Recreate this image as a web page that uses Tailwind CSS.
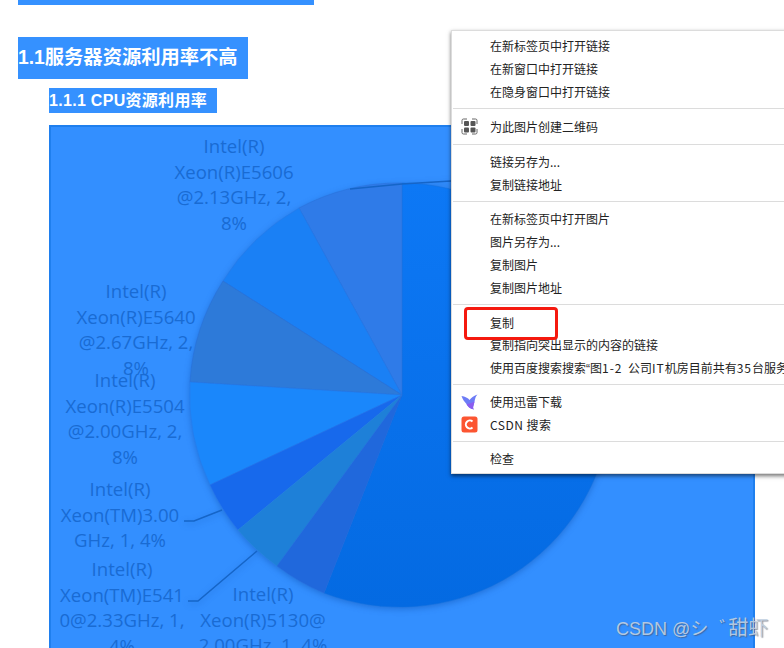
<!DOCTYPE html>
<html lang="zh-CN">
<head>
    <meta charset="UTF-8">
    <title>Context menu over chart</title>
    <script src="https://cdn.jsdelivr.net/npm/@tailwindcss/browser@4"></script>
</head>
<body class="relative w-[784px] h-[648px] overflow-hidden bg-white font-['Liberation_Sans','Noto_Sans_CJK_SC',sans-serif]">

    <!-- Document -->
    <div class="ml-[18px] w-[296px] h-[5px] bg-[#3591ff]"></div>
    <h2 class="ml-[18px] mt-[32px] w-[230px] h-[42px] bg-[#3591ff] text-white font-bold text-[19.3px] leading-[42px] whitespace-nowrap">1.1服务器资源利用率不高</h2>
    <h3 class="ml-[49px] mt-[9px] w-[168px] h-[25px] bg-[#3591ff] text-white font-bold text-[16px] tracking-[0.3px] leading-[25px] whitespace-nowrap">1.1.1 CPU资源利用率</h3>

    <!-- Pie chart -->
    <div class="relative ml-[49px] mt-[12px] w-[706px] h-[600px] bg-[#338fff] border-2 border-[#1f7fee] font-['Open_Sans',sans-serif] text-[18.6px] leading-[25.5px] text-[#196bd3] text-center">
        <svg class="absolute left-[-51px] top-[-127px] w-[784px] h-[648px] drop-shadow-[0_2px_3px_rgba(0,60,150,0.35)]" viewBox="0 0 784 648">
            <defs>
                <linearGradient id="main" x1="0" y1="0" x2="0" y2="1">
                    <stop offset="0" stop-color="#0d78f5"></stop>
                    <stop offset="1" stop-color="#046ae2"></stop>
                </linearGradient>
            </defs>
            <g stroke-width="1" stroke-opacity="0.5">
                <path d="M402 395 L402 183 A212 212 0 1 1 324 593 Z" fill="url(#main)" stroke="#0f6fe0"></path>
                <path d="M402 395 L299 208 A212 212 0 0 1 402 183 Z" fill="#2f7be8" stroke="#2a70d8"></path>
                <path d="M402 395 L223 281 A212 212 0 0 1 299 208 Z" fill="#1a80f5" stroke="#2a7ae8"></path>
                <path d="M402 395 L190 382 A212 212 0 0 1 223 281 Z" fill="#2d7ad9" stroke="#2a70d8"></path>
                <path d="M402 395 L210 485 A212 212 0 0 1 190 382 Z" fill="#1a87fb" stroke="#2a7ae8"></path>
                <path d="M402 395 L238 530 A212 212 0 0 1 210 485 Z" fill="#1769ec" stroke="#2a75ee"></path>
                <path d="M402 395 L277 566 A212 212 0 0 1 238 530 Z" fill="#1e80d8" stroke="#2a8ae0"></path>
                <path d="M402 395 L324 593 A212 212 0 0 1 277 566 Z" fill="#2068dc" stroke="#2a70e0"></path>
            </g>
            <g fill="none" stroke="#1565c8" stroke-width="1.5">
                <path d="M350 189 L402 184 L451 181"></path>
                <path d="M184 521 L194 521 L222 510"></path>
                <path d="M188 601 L198 601 L257 551"></path>
            </g>
        </svg>
        <div class="absolute left-[103px] top-[6px] w-[160px]">Intel(R)<br>Xeon(R)E5606<br>@2.13GHz, 2,<br>8%</div>
        <div class="absolute left-[5px] top-[151px] w-[160px]">Intel(R)<br>Xeon(R)E5640<br>@2.67GHz, 2,<br>8%</div>
        <div class="absolute left-[-6px] top-[240px] w-[160px]">Intel(R)<br>Xeon(R)E5504<br>@2.00GHz, 2,<br>8%</div>
        <div class="absolute left-[-11px] top-[349px] w-[160px]">Intel(R)<br>Xeon(TM)3.00<br>GHz, 1, 4%</div>
        <div class="absolute left-[-9px] top-[429px] w-[160px]">Intel(R)<br>Xeon(TM)E541<br>0@2.33GHz, 1,<br>4%</div>
        <div class="absolute left-[132px] top-[454px] w-[160px]">Intel(R)<br>Xeon(R)5130@<br>2.00GHz, 1, 4%</div>
    </div>

    <!-- Watermark -->
    <div class="absolute left-[616px] top-[615px] text-[18px] leading-[26px] whitespace-nowrap text-[#c4d2e2]/90 [text-shadow:1px_1px_1px_rgba(70,80,100,0.6)]">CSDN @シ<span class="inline-block w-[20px] pl-[11px]">゛</span><span class="text-[20px]">甜虾</span></div>

    <!-- Context menu -->
    <div class="absolute left-[451px] top-[30px] w-[340px] h-[444px] bg-white border border-[#dcdcdc] shadow-[0_2px_4px_rgba(0,0,0,0.55)] pt-[3px] text-[12px] text-[#222] whitespace-nowrap overflow-hidden font-['Noto_Sans_CJK_SC',sans-serif]">
        <div class="h-[23px] leading-[23px] pl-[38px]">在新标签页中打开链接</div>
        <div class="h-[23px] leading-[23px] pl-[38px]">在新窗口中打开链接</div>
        <div class="h-[23px] leading-[23px] pl-[38px]">在隐身窗口中打开链接</div>
        <div class="h-px bg-[#dcdcdc] ml-[1px] my-[5px]"></div>
        <div class="flex items-center h-[25px] pl-[9px]">
            <svg class="w-[17px] h-[17px] mr-[12px]" viewBox="0 0 17 17">
                <path d="M1 6V2.500A1.500 1.500 0 0 1 2.500 1H6M11 1h3.500A1.500 1.500 0 0 1 16 2.500V6M16 11v3.500a1.500 1.500 0 0 1-1.500 1.500H11M6 16H2.500A1.500 1.500 0 0 1 1 14.500V11" fill="none" stroke="#666" stroke-width="1"></path>
                <rect x="3" y="3" width="5" height="5" rx="1" fill="#555"></rect>
                <rect x="9.500" y="3" width="5" height="5" rx="1" fill="#555"></rect>
                <rect x="3" y="9.500" width="5" height="5" rx="1" fill="#555"></rect>
                <rect x="9.500" y="9.500" width="5" height="5" rx="1" fill="#555"></rect>
            </svg>
            <span>为此图片创建二维码</span>
        </div>
        <div class="h-px bg-[#dcdcdc] ml-[1px] my-[5px]"></div>
        <div class="h-[23px] leading-[23px] pl-[38px]">链接另存为...</div>
        <div class="h-[23px] leading-[23px] pl-[38px]">复制链接地址</div>
        <div class="h-px bg-[#dcdcdc] ml-[1px] my-[5px]"></div>
        <div class="h-[23px] leading-[23px] pl-[38px]">在新标签页中打开图片</div>
        <div class="h-[23px] leading-[23px] pl-[38px]">图片另存为...</div>
        <div class="h-[23px] leading-[23px] pl-[38px]">复制图片</div>
        <div class="h-[23px] leading-[23px] pl-[38px]">复制图片地址</div>
        <div class="h-px bg-[#dcdcdc] ml-[1px] my-[5px]"></div>
        <div class="h-[23px] leading-[25px] pl-[38px]">复制</div>
        <div class="h-[23px] leading-[23px] pl-[38px]">复制指向突出显示的内容的链接</div>
        <div class="h-[23px] leading-[23px] pl-[38px]">使用百度搜索搜索<span class="font-['Liberation_Sans']">“</span>图<span class="tracking-[1px]">1-2</span>&nbsp;&nbsp;公司<span class="tracking-[1px]">IT</span>机房目前共有<span class="tracking-[1px]">35</span>台服务器</div>
        <div class="h-px bg-[#dcdcdc] ml-[1px] my-[5px]"></div>
        <div class="flex items-center h-[23px] pl-[9px]">
            <svg class="w-[17px] h-[17px] mr-[12px]" viewBox="0 0 17 17">
                <path d="M0.500 3 C4 3.500 7 5 8.500 7 C10.500 4.500 13 2.500 16.500 1.500 C14.500 3.500 14 6 13.500 8.500 C13 12 11 15 13 16.500 C9 16 6.500 13.500 5.500 11 C3.500 9 1.500 6 0.500 3 Z" fill="#6d7cf6"></path>
                <path d="M13 16.500 C9 16 6.500 13.500 5.500 11 C8 11 11 10 13.500 8.500 C13 12 11 15 13 16.500 Z" fill="#8b5cf0"></path>
            </svg>
            <span>使用迅雷下载</span>
        </div>
        <div class="flex items-center h-[23px] pl-[9px]">
            <svg class="w-[17px] h-[17px] mr-[12px]" viewBox="0 0 17 17">
                <rect width="16" height="16" x="0.500" y="0.500" rx="2.500" fill="#fc5531"></rect>
                <path d="M11.500 5.500 A4 4 0 1 0 11.500 11.500" fill="none" stroke="#fff" stroke-width="2"></path>
            </svg>
            <span class="tracking-[0.5px]">CSDN 搜索</span>
        </div>
        <div class="h-px bg-[#dcdcdc] ml-[1px] my-[5px]"></div>
        <div class="h-[23px] leading-[23px] pl-[38px]">检查</div>
    </div>

    <!-- Red annotation box -->
    <div class="absolute left-[464px] top-[307px] w-[94px] h-[33px] border-[3px] border-[#f5190f] rounded-[4px]"></div>
</body>
</html>
